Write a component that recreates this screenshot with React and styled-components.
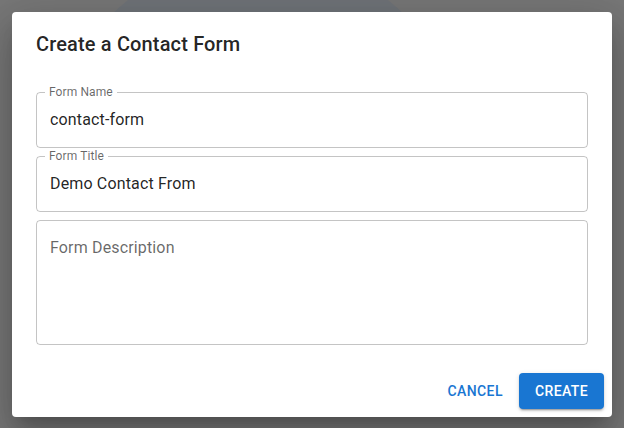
import React from 'react';
import styled, { createGlobalStyle } from 'styled-components';

const GlobalStyle = createGlobalStyle`
  html, body {
    margin: 0;
    padding: 0;
  }
  body {
    font-family: Roboto, "Liberation Sans", sans-serif;
    background: #eeeeee;
  }
`;

const Page = styled.div`
  position: relative;
  width: 100vw;
  height: 100vh;
  overflow: hidden;
  background: #eeeeee;
`;

// blurred content of the page that sits under the backdrop
const BehindBlob = styled.div`
  position: absolute;
  left: 48px;
  top: -45px;
  width: 420px;
  height: 420px;
  border-radius: 50%;
  background: #dee6f0;
`;

const Backdrop = styled.div`
  position: absolute;
  inset: 0;
  background: rgba(0, 0, 0, 0.5);
  display: flex;
  align-items: flex-start;
  justify-content: center;
  padding-top: 12px;
`;

const Dialog = styled.div`
  width: 600px;
  background: #fff;
  border-radius: 4px;
  color: rgba(0, 0, 0, 0.87);
  box-shadow: 0px 11px 15px -7px rgba(0, 0, 0, 0.2),
    0px 24px 38px 3px rgba(0, 0, 0, 0.14),
    0px 9px 46px 8px rgba(0, 0, 0, 0.12);
  display: flex;
  flex-direction: column;
`;

const Title = styled.h2`
  margin: 0;
  padding: 16px 24px;
  font-size: 20px;
  font-weight: 500;
  line-height: 32px;
  letter-spacing: 0.15px;
`;

const Content = styled.div`
  padding: 10px 24px 20px;
  display: flex;
  flex-direction: column;
  gap: 2px;
`;

const Field = styled.fieldset`
  margin: 0;
  padding: 0 13px;
  border: 1px solid rgba(0, 0, 0, 0.23);
  border-radius: 4px;
  min-width: 0;
`;

const Legend = styled.legend`
  height: 12px;
  padding: ${(p) => (p.$empty ? '0' : '0 4px')};
  margin-left: -5px;
  font-size: 12px;
  line-height: 12px;
  color: rgba(0, 0, 0, 0.6);
  letter-spacing: 0.1px;
`;

const Value = styled.input`
  display: block;
  width: 100%;
  box-sizing: border-box;
  border: none;
  outline: none;
  margin: 0;
  padding: 10px 0 16px;
  font-family: Roboto, "Liberation Sans", sans-serif;
  font-size: 16px;
  line-height: 23px;
  height: 49px;
  color: rgba(0, 0, 0, 0.87);
  letter-spacing: 0.15px;
  background: transparent;
`;

const Area = styled.textarea`
  display: block;
  width: 100%;
  box-sizing: border-box;
  border: none;
  outline: none;
  resize: none;
  margin: 0;
  padding: 10px 0 16px;
  height: 118px;
  font-family: Roboto, "Liberation Sans", sans-serif;
  font-size: 16px;
  line-height: 23px;
  color: rgba(0, 0, 0, 0.87);
  letter-spacing: 0.15px;
  background: transparent;

  &::placeholder {
    color: rgba(0, 0, 0, 0.6);
    opacity: 1;
  }
`;

const Actions = styled.div`
  padding: 8px;
  display: flex;
  justify-content: flex-end;
  align-items: center;
  gap: 8px;
`;

const Button = styled.button`
  font-family: Roboto, "Liberation Sans", sans-serif;
  font-size: 14px;
  font-weight: 500;
  line-height: 24px;
  letter-spacing: 0.4px;
  text-transform: uppercase;
  border: none;
  border-radius: 4px;
  min-width: 64px;
  cursor: pointer;
  padding: ${(p) => (p.$contained ? '6px 16px' : '6px 8px')};
  color: ${(p) => (p.$contained ? '#fff' : '#1976d2')};
  background: ${(p) => (p.$contained ? '#1976d2' : 'transparent')};
  box-shadow: ${(p) =>
    p.$contained
      ? '0px 3px 1px -2px rgba(0,0,0,0.2), 0px 2px 2px 0px rgba(0,0,0,0.14), 0px 1px 5px 0px rgba(0,0,0,0.12)'
      : 'none'};
`;

export default function App() {
  return (
    <Page>
      <GlobalStyle />
      <BehindBlob />
      <Backdrop>
        <Dialog>
          <Title>Create a Contact Form</Title>
          <Content>
            <Field>
              <Legend>Form Name</Legend>
              <Value defaultValue="contact-form" />
            </Field>
            <Field>
              <Legend>Form Title</Legend>
              <Value defaultValue="Demo Contact From" />
            </Field>
            <Field>
              <Legend $empty />
              <Area rows={4} placeholder="Form Description" />
            </Field>
          </Content>
          <Actions>
            <Button>Cancel</Button>
            <Button $contained>Create</Button>
          </Actions>
        </Dialog>
      </Backdrop>
    </Page>
  );
}
